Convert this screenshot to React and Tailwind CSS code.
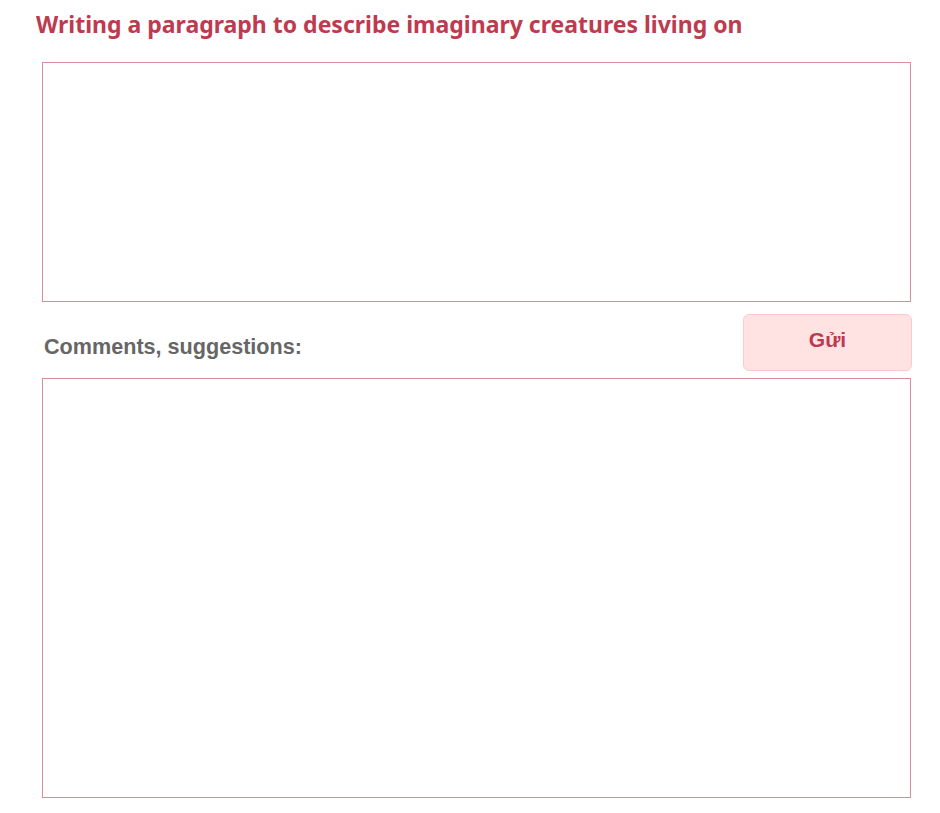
export default function App() {
  return (
    <div className="w-[940px] h-[813px] bg-white relative">
      <div className="pl-[36px] pt-[10px]">
        <h1 className="text-[23px] leading-[28px] font-bold text-[#be3a4f] font-['Noto_Sans',sans-serif]">
          Writing a paragraph to describe imaginary creatures living on
        </h1>
      </div>
      <div className="pl-[42px] pr-[29px]">
        <textarea className="block mt-[24px] w-[869px] h-[240px] border border-[#dc8c9b] resize-none outline-none" />
        <div className="flex items-start justify-between mt-[12px] w-[870px]">
          <div className="pt-[20px] pl-[2px] text-[21.6px] leading-[26px] font-bold text-[#666] font-['Liberation_Sans',Arial,sans-serif]">
            Comments, suggestions:
          </div>
          <button className="w-[169px] h-[57px] bg-[#ffe3e3] border border-[#fdc8cf] rounded-[6px] text-[21px] font-bold text-[#bb3a4f] font-['Liberation_Sans',Arial,sans-serif] pb-[6px]">
            Gửi
          </button>
        </div>
        <textarea className="block mt-[7px] w-[869px] h-[420px] border border-[#dc8c9b] resize-none outline-none" />
      </div>
    </div>
  );
}
